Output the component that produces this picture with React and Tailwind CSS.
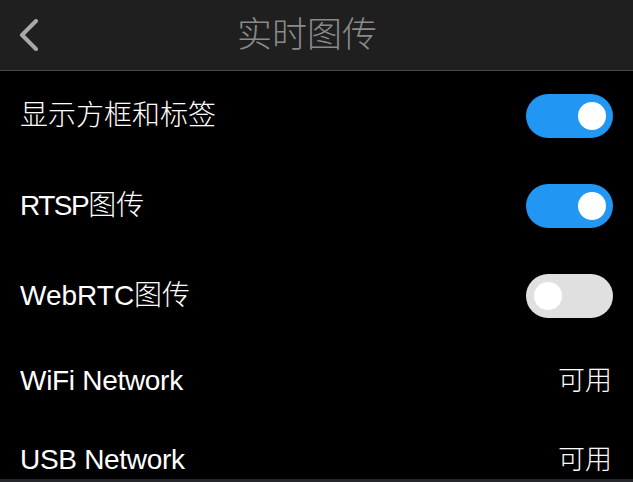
import React from "react";

const font = { fontFamily: '"Liberation Sans", "Noto Sans CJK SC", sans-serif' };

function Toggle({ on }) {
  return (
    <div
      className={
        "relative h-[44px] w-[87px] rounded-full " +
        (on ? "bg-[#2196f3]" : "bg-[#e0e0e0]")
      }
    >
      <div
        className={
          "absolute top-[8px] h-[28px] w-[28px] rounded-full bg-white " +
          (on ? "right-[7px]" : "left-[8px]")
        }
      />
    </div>
  );
}

function ToggleRow({ children, on }) {
  return (
    <div className="flex h-[90px] shrink-0 items-center justify-between pl-[20px] pr-[20px]">
      <span className="text-[28px] font-light leading-[32px] text-white">{children}</span>
      <Toggle on={on} />
    </div>
  );
}

function InfoRow({ label, value }) {
  return (
    <div className="flex h-[79px] shrink-0 items-center justify-between pl-[20px] pr-[21px]">
      <span className="text-[28px] font-light leading-[32px] tracking-[-0.3px] text-white">{label}</span>
      <span className="text-[27px] font-light leading-[32px] text-white">{value}</span>
    </div>
  );
}

export default function App() {
  return (
    <div className="flex h-[482px] w-[633px] flex-col overflow-hidden bg-black" style={font}>
      <div className="flex h-[71px] shrink-0 items-center border-b border-[#4a4a4a] bg-[#1f1f1f]">
        <div className="flex w-[56px] items-center pl-[19px]">
          <svg width="20" height="32" viewBox="0 0 20 32" fill="none">
            <path d="M17 2 L3 16 L17 30" stroke="#a8a8a8" strokeWidth="4" strokeLinecap="round" strokeLinejoin="round" />
          </svg>
        </div>
        <div className="flex-1 text-center text-[35px] font-light leading-[40px] text-[#8a8a8a]">实时图传</div>
        <div className="w-[75px]" />
      </div>
      <div className="flex flex-1 flex-col overflow-hidden">
        <ToggleRow on>显示方框和标签</ToggleRow>
        <ToggleRow on>
          <span className="tracking-[-1.5px]">RTSP</span>图传
        </ToggleRow>
        <ToggleRow on={false}>WebRTC图传</ToggleRow>
        <InfoRow label="WiFi Network" value="可用" />
        <InfoRow label="USB Network" value="可用" />
      </div>
      <div className="h-[3px] shrink-0 bg-[#26272c]" />
    </div>
  );
}
